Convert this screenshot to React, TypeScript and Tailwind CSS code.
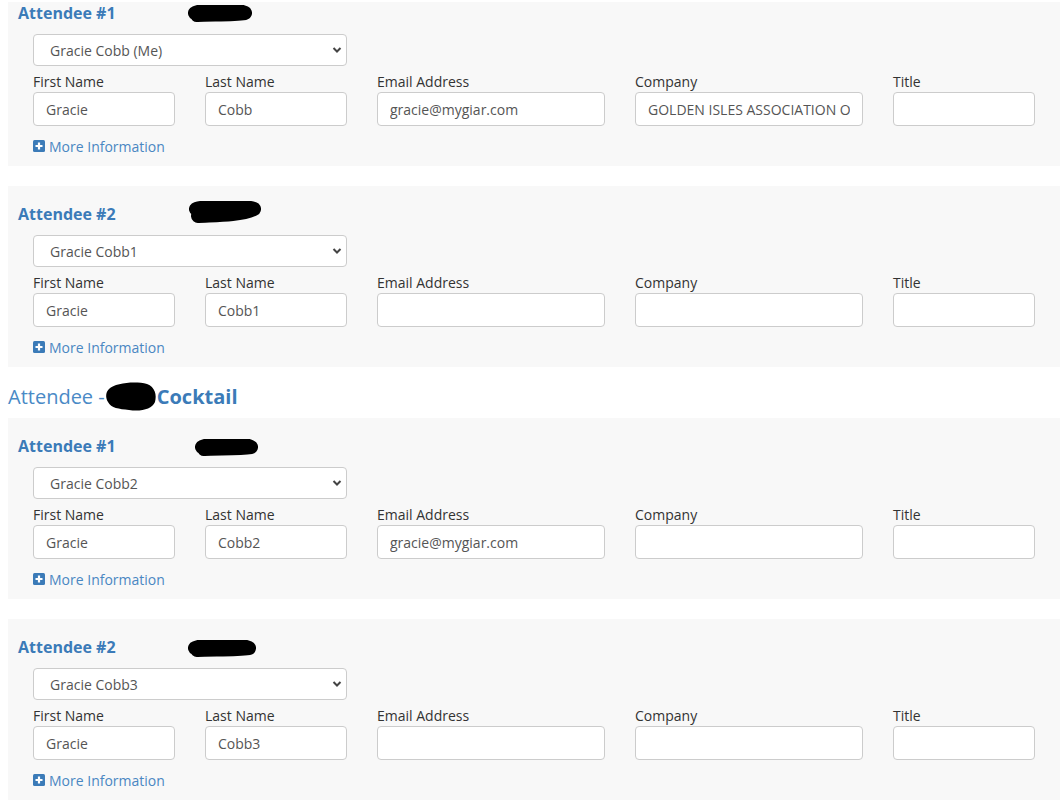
import React from 'react'

type Blob = { left: number; top: number; w: number; h: number }

type Attendee = {
  title: string;
  choice: string;
  first: string;
  last: string;
  email: string;
  company: string;
  blob: Blob;
}

const fontStack = { fontFamily: '"Open Sans", "Noto Sans", sans-serif' }

function Scribble({ w, h }: { w: number; h: number }) {
  const sw = Math.min(h - 2, 14)
  return (
    <svg width={w} height={h} viewBox={`0 0 ${w} ${h}`} className="block">
      <path
        d={`M ${sw / 2} ${sw / 2 + 1} C ${w * 0.3} ${h * 0.2}, ${w * 0.7} ${h * 0.15}, ${w - sw / 2} ${sw / 2 + 1} C ${w * 0.7} ${h - sw / 2}, ${w * 0.3} ${h - sw / 2 - 1}, ${sw / 2 + 2} ${h - sw / 2}`}
        fill="none"
        stroke="#000"
        strokeWidth={sw}
        strokeLinecap="round"
        strokeLinejoin="round"
      />
    </svg>
  )
}

function Field({ label, value, width }: { label: string; value: string; width: string }) {
  return (
    <div className={`flex flex-col ${width}`}>
      <label className="text-[14px] leading-[20px] text-[#333]">{label}</label>
      <input
        readOnly
        defaultValue={value}
        className="h-[34px] w-full rounded-[4px] border border-[#ccc] bg-white px-3 text-[14px] text-[#555] outline-none"
      />
    </div>
  )
}

function AttendeePanel({ a, first }: { a: Attendee; first?: boolean }) {
  return (
    <div className={`ml-2 mr-[3px] bg-[#f8f8f8] pb-[10px] ${first ? 'pt-0' : 'pt-[17px]'}`}>
      <div className="relative flex h-[22px] items-center pl-[10px]">
        <span className="text-[16px] font-bold leading-[22px] text-[#3b7bb8]">{a.title}</span>
        <div className="absolute" style={{ left: a.blob.left, top: a.blob.top }}>
          <Scribble w={a.blob.w} h={a.blob.h} />
        </div>
      </div>
      <div className="pl-[25px] pr-[25px]">
        <div className="relative mt-[10px] w-[314px]">
          <select
            defaultValue={a.choice}
            className="h-[32px] w-full appearance-none rounded-[4px] border border-[#ccc] bg-white pl-4 text-[14px] text-[#555] outline-none"
          >
            <option>{a.choice}</option>
          </select>
          <svg className="pointer-events-none absolute right-[5px] top-[12px]" width="10" height="8" viewBox="0 0 10 8">
            <path d="M1.5 2 L5 5.5 L8.5 2" fill="none" stroke="#444" strokeWidth="2" />
          </svg>
        </div>
        <div className="mt-[6px] flex gap-[30px]">
          <Field label="First Name" value={a.first} width="w-[142px]" />
          <Field label="Last Name" value={a.last} width="w-[142px]" />
          <Field label="Email Address" value={a.email} width="w-[228px]" />
          <Field label="Company" value={a.company} width="w-[228px]" />
          <Field label="Title" value="" width="w-[142px]" />
        </div>
        <div className="mt-[10px] flex h-[20px] items-center gap-[4px] text-[14px] text-[#4a87c2]">
          <svg width="12" height="12" viewBox="0 0 12 12">
            <rect x="0" y="0" width="12" height="12" rx="1.5" fill="#3b7bb8" />
            <path d="M6 2.5 V9.5 M2.5 6 H9.5" stroke="#fff" strokeWidth="2.2" />
          </svg>
          <span>More Information</span>
        </div>
      </div>
    </div>
  )
}

const group1: Attendee[] = [
  {
    title: 'Attendee #1',
    choice: 'Gracie Cobb (Me)',
    first: 'Gracie',
    last: 'Cobb',
    email: 'gracie@mygiar.com',
    company: 'GOLDEN ISLES ASSOCIATION OF REALTORS',
    blob: { left: 180, top: 3, w: 64, h: 17 },
  },
  {
    title: 'Attendee #2',
    choice: 'Gracie Cobb1',
    first: 'Gracie',
    last: 'Cobb1',
    email: '',
    company: '',
    blob: { left: 181, top: -2, w: 72, h: 22 },
  },
]

const group2: Attendee[] = [
  {
    title: 'Attendee #1',
    choice: 'Gracie Cobb2',
    first: 'Gracie',
    last: 'Cobb2',
    email: 'gracie@mygiar.com',
    company: '',
    blob: { left: 187, top: 4, w: 63, h: 17 },
  },
  {
    title: 'Attendee #2',
    choice: 'Gracie Cobb3',
    first: 'Gracie',
    last: 'Cobb3',
    email: '',
    company: '',
    blob: { left: 180, top: 4, w: 68, h: 17 },
  },
]

export default function App() {
  return (
    <div className="min-h-screen bg-white pt-[2px]" style={fontStack}>
      <AttendeePanel a={group1[0]} first />
      <div className="mt-[20px]">
        <AttendeePanel a={group1[1]} />
      </div>
      <div className="mb-[7px] mt-[16px] flex h-[28px] items-center pl-2 text-[20px] leading-[28px]">
        <span className="text-[#4a8ac6]">Attendee -</span>
        <svg width="52" height="31" viewBox="0 0 52 31" className="-mt-[1px] block">
          <path
            d="M4 8 C10 2, 30 0, 42 3 C50 6, 52 14, 50 21 C47 28, 36 31, 24 29 C14 28, 6 27, 3 21 C0 16, 1 11, 4 8 Z"
            fill="#000"
          />
        </svg>
        <span className="font-bold text-[#3b7bb8]">Cocktail</span>
      </div>
      <AttendeePanel a={group2[0]} />
      <div className="mt-[20px]">
        <AttendeePanel a={group2[1]} />
      </div>
    </div>
  )
}
